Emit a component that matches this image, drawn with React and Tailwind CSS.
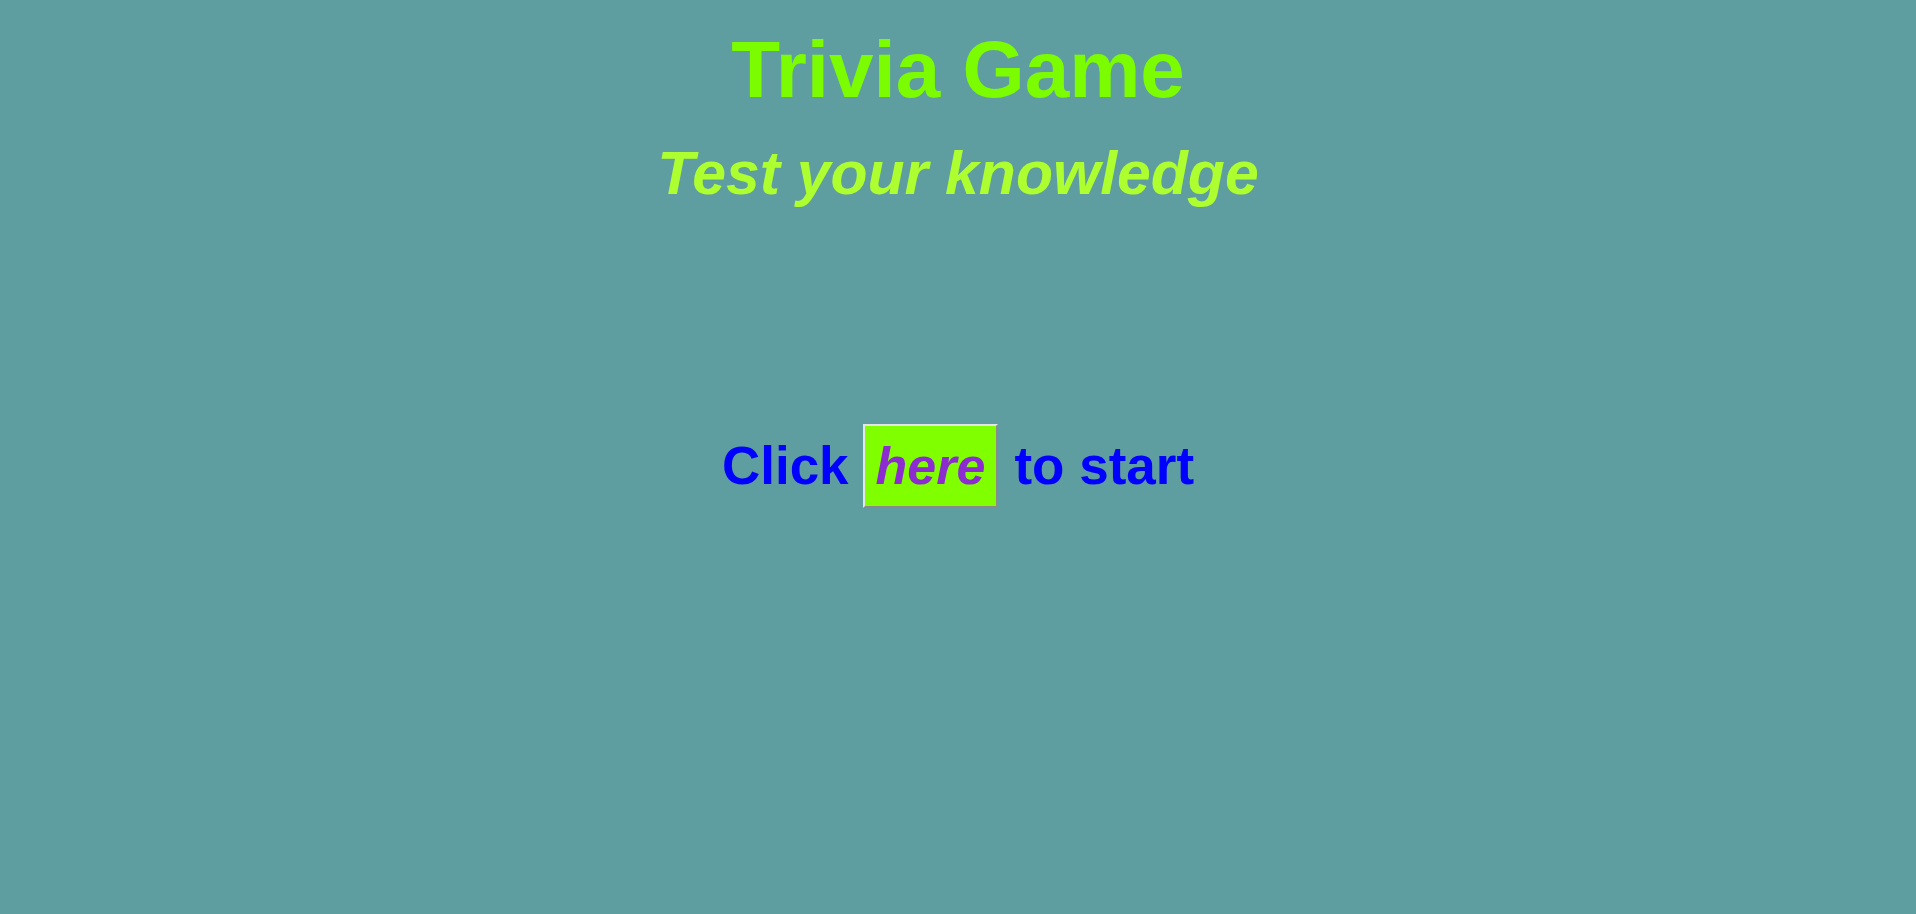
export default function App() {
  return (
    <div className="min-h-[914px] w-full bg-[#5F9EA0] text-center" style={{ fontFamily: '"Liberation Sans", Arial, sans-serif' }}>
      <h1 className="pt-[24px] text-[80px] font-bold leading-[92px] text-[#7CFC00]">Trivia Game</h1>
      <h2 className="mt-[23px] text-[60.7px] font-bold italic leading-[69px] text-[#ADFF2F]">Test your knowledge</h2>
      <div className="mt-[216px] flex items-baseline justify-center text-[53px] font-bold leading-[61px] text-[#0000FF]">
        <span>Click</span>
        <button className="ml-[14px] mr-[16px] border-2 border-t-[#e5e5e5] border-l-[#e5e5e5] border-r-[#8a8a8a] border-b-[#8a8a8a] bg-[#7FFF00] px-[11px] py-[10px] text-[52px] font-bold italic leading-[60px] text-[#8B2BD0]">here</button>
        <span>to start</span>
      </div>
    </div>
  );
}
